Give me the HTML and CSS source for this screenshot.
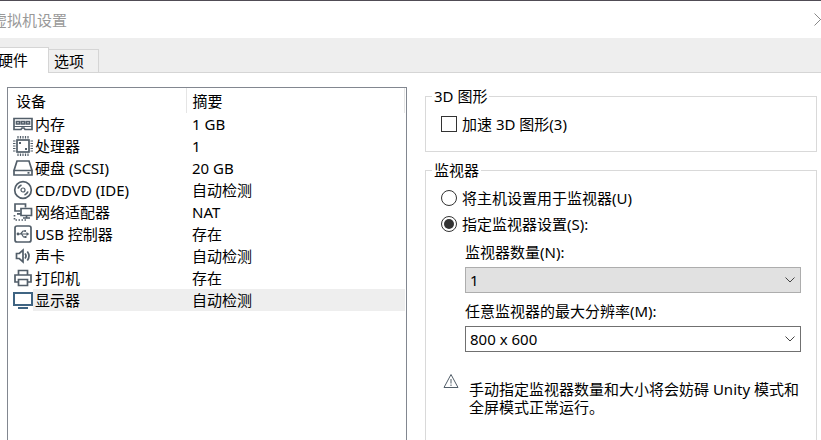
FILE: index.html
```html
<!DOCTYPE html>
<html lang="zh-CN">
<head>
  <meta charset="UTF-8">
  <meta name="viewport" content="width=device-width, initial-scale=1.0">
  <title>虚拟机设置</title>
  <link rel="stylesheet" href="styles.css">
</head>
<body>
  <div class="dialog">
    <header class="titlebar">
      <h1>虚拟机设置</h1>
      <button type="button" class="close" aria-label="关闭">
        <svg width="13" height="13" viewBox="0 0 13 13"><path d="M.5 .5l12 12M12.5 .5l-12 12"/></svg>
      </button>
    </header>

    <nav class="tabs">
      <button type="button" class="tab active">硬件</button>
      <button type="button" class="tab">选项</button>
    </nav>

    <main class="content">
      <!-- Device list -->
      <div class="devices">
        <table>
          <thead>
            <tr><th class="name">设备</th><th>摘要</th></tr>
          </thead>
          <tbody>
            <tr>
              <td><div class="device"><svg class="icon" viewBox="0 0 20 20"><path d="M1 4.500h18v11h-7l-1-1.500H9l-1 1.500H1z"/><path d="M3.500 7.500h3v2.500h-3zM8.500 7.500h3v2.500h-3zM13.500 7.500h3v2.500h-3z"/><path d="M1 12.500h18" stroke-width="1"/></svg><span>内存</span></div></td>
              <td>1 GB</td>
            </tr>
            <tr>
              <td><div class="device"><svg class="icon" viewBox="0 0 20 20"><rect x="4" y="4" width="12" height="12"/><path d="M5 0v2.500M7.500 0v2.500M10 0v2.500M12.500 0v2.500M15 0v2.500M5 17.500V20M7.500 17.500V20M10 17.500V20M12.500 17.500V20M15 17.500V20M0 5h2.500M0 7.500h2.500M0 10h2.500M0 12.500h2.500M0 15h2.500M17.500 5H20M17.500 7.500H20M17.500 10H20M17.500 12.500H20M17.500 15H20" stroke-width="1.200"/><path class="solid" d="M6 6h2v2H6zM12 12h2v2h-2z"/></svg><span>处理器</span></div></td>
              <td>1</td>
            </tr>
            <tr>
              <td><div class="device"><svg class="icon" viewBox="0 0 20 20"><path d="M4 3h12l3 9.500H1zM1 12.500h18V17H1zM14.500 14.800h2"/></svg><span>硬盘 (SCSI)</span></div></td>
              <td>20 GB</td>
            </tr>
            <tr>
              <td><div class="device"><svg class="icon" viewBox="0 0 20 20"><circle cx="10" cy="10" r="8.300"/><circle cx="10" cy="10" r="2" stroke-width="1.200"/><path d="M5 8.500Q6 6 8.500 5M15 11.500Q14 14 11.500 15"/></svg><span>CD/DVD (IDE)</span></div></td>
              <td>自动检测</td>
            </tr>
            <tr>
              <td><div class="device"><svg class="icon" viewBox="0 0 20 20"><path d="M7 9H2V2h10.500v3.500M4 11.800h4"/><path d="M8 6.500h10.500v7H8zM13.500 13.500V16M10 16h7"/><path d="M1.500 13v5H13" stroke-dasharray="1.500 1.500"/></svg><span>网络适配器</span></div></td>
              <td>NAT</td>
            </tr>
            <tr>
              <td><div class="device"><svg class="icon" viewBox="0 0 20 20"><rect x="2" y="2" width="16" height="16" rx="2"/><path d="M5 10h9.500M7.500 10l2.500-3h2M8.500 10l2 3h2" stroke-width="1.200"/><path class="solid" d="M13.500 8l2.800 2-2.800 2z"/><circle class="solid" cx="5" cy="10" r="1.400"/><circle class="solid" cx="12.200" cy="7" r="1"/><path class="solid" d="M11.500 12h2v2h-2z"/></svg><span>USB 控制器</span></div></td>
              <td>存在</td>
            </tr>
            <tr>
              <td><div class="device"><svg class="icon" viewBox="0 0 20 20"><path d="M3.500 7.500h2.800l3.700-3.300v11.600l-3.700-3.300H3.500zM12 7.500q2 2.500 0 5M14.300 5.500q3.400 4.500 0 9"/></svg><span>声卡</span></div></td>
              <td>自动检测</td>
            </tr>
            <tr>
              <td><div class="device"><svg class="icon" viewBox="0 0 20 20"><path d="M5.500 7V2.500h9V7M5 14H2V7h16v7h-3M5.500 11.500h9v6h-9z"/></svg><span>打印机</span></div></td>
              <td>存在</td>
            </tr>
            <tr class="selected">
              <td><div class="device"><svg class="icon display" viewBox="0 0 20 20"><path d="M1 3h18v12H1z"/><path d="M5 18h10"/></svg><span>显示器</span></div></td>
              <td>自动检测</td>
            </tr>
          </tbody>
        </table>
      </div>

      <!-- Display settings -->
      <form class="settings">
        <fieldset>
          <legend>3D 图形</legend>
          <label class="option"><input type="checkbox" name="accelerate">加速 3D 图形(3)</label>
        </fieldset>

        <fieldset class="monitor">
          <legend>监视器</legend>
          <label class="option"><input type="radio" name="monitor" value="host">将主机设置用于监视器(U)</label>
          <label class="option"><input type="radio" name="monitor" value="custom" checked>指定监视器设置(S):</label>

          <div class="field">
            <label for="count">监视器数量(N):</label>
            <div class="select">
              <select id="count" class="muted">
                <option>1</option>
              </select>
              <svg width="10" height="6" viewBox="0 0 10 6"><path d="M.5 .5L5 5L9.500 .5"/></svg>
            </div>
          </div>
          <div class="field">
            <label for="resolution">任意监视器的最大分辨率(M):</label>
            <div class="select">
              <select id="resolution">
                <option>800 x 600</option>
              </select>
              <svg width="10" height="6" viewBox="0 0 10 6"><path d="M.5 .5L5 5L9.500 .5"/></svg>
            </div>
          </div>

          <div class="warning">
            <svg width="16" height="16" viewBox="0 0 16 16"><path d="M8 1.500L15 14.500H1zM8 6v4.500M8 11.500v1.500"/></svg>
            <p>手动指定监视器数量和大小将会妨碍 Unity 模式和全屏模式正常运行。</p>
          </div>
        </fieldset>
      </form>
    </main>
  </div>
</body>
</html>
```

FILE: styles.css
```css
* {
  box-sizing: border-box;
}

body {
  margin: 0;
  overflow: hidden;
  background: #fff;
  color: #000;
  font-family: "Noto Sans", "Noto Sans CJK SC", sans-serif;
  font-size: 15px;
  line-height: 20px;
}

button, select {
  font: inherit;
  color: inherit;
}

svg {
  flex: none;
  fill: none;
  stroke: #525e69;
}

/* The dialog is a little wider than the viewport on both sides */
.dialog {
  display: flex;
  flex-direction: column;
  height: 100vh;
  margin: 0 -6px 0 -8px;
  border-top: 1px solid #504c55;
}

.titlebar {
  display: flex;
  align-items: center;
  justify-content: space-between;
  height: 37px;
}

.titlebar h1 {
  margin: 0;
  color: #999;
  font-size: 15px;
  font-weight: normal;
}

.close {
  display: flex;
  padding: 0;
  border: none;
  background: none;
}

.close svg {
  stroke: #888;
}

/* Tabs */
.tabs {
  display: flex;
  align-items: flex-end;
  height: 35px;
  background: #eee;
  box-shadow: inset 0 -1px #d5d5d5;
}

.tab {
  height: 24px;
  padding: 0 14px 0 5px;
  border: 1px solid #d5d5d5;
  border-left: none;
  background: #f0f0f0;
}

.tab.active {
  height: 26px;
  padding: 0 20px 2px 6px;
  border-bottom: none;
  background: #fff;
}

.content {
  display: grid;
  grid-template-columns: 400fr 392fr;
  gap: 18px;
  flex: 1;
  min-height: 0;
  padding: 14px 10px 0 15px;
}

/* Device list */
.devices {
  border: 1px solid #828790;
  border-bottom: none;
  padding-right: 1px;
}

table {
  width: 100%;
  border-collapse: collapse;
  table-layout: fixed;
}

th, td {
  height: 22px;
  padding: 0 0 0 6px;
  text-align: left;
  font-weight: normal;
}

th {
  height: 25px;
  border-right: 1px solid #e5e5e5;
}

th.name {
  width: 178px;
  padding-left: 8px;
}

td:first-child {
  padding-left: 5px;
}

.device {
  display: flex;
  align-items: center;
  gap: 2px;
}

.icon {
  width: 20px;
  height: 20px;
  stroke-width: 1.7;
}

.solid {
  fill: #525e69;
  stroke: none;
}

.display {
  stroke: #3f6482;
  stroke-width: 2;
}

.selected {
  background: linear-gradient(to right, #fff 25px, #eee 25px);
}

/* Settings */
.settings {
  display: flex;
  flex-direction: column;
  gap: 8px;
  margin-top: -1px;
  min-width: 0;
}

fieldset {
  min-width: 0;
  margin: 0;
  padding: 8px 15px 17px;
  border: 1px solid #d9d9d9;
}

legend {
  margin-left: -9px;
  padding: 0 2px;
}

.option {
  display: flex;
  align-items: center;
  gap: 5px;
}

.option + .option {
  margin-top: 6px;
}

.option input {
  display: grid;
  place-content: center;
  width: 16px;
  height: 16px;
  margin: 0;
  border: 1px solid #333;
  background: #fff;
  appearance: none;
}

.option input[type="radio"] {
  border-radius: 50%;
}

.option input:checked::before {
  content: "";
  width: 10px;
  height: 10px;
  border-radius: 50%;
  background: #333;
}

.monitor {
  flex: 1;
  border-bottom: none;
}

.field {
  display: flex;
  flex-direction: column;
  gap: 5px;
  margin-top: 8px;
  padding-left: 24px;
}

.select {
  display: grid;
  align-items: center;
}

.select select,
.select svg {
  grid-area: 1 / 1;
}

.select svg {
  justify-self: end;
  margin-right: 6px;
  stroke: #444;
  pointer-events: none;
}

select {
  width: 100%;
  height: 26px;
  padding: 0 4px;
  border: 1px solid #707070;
  border-radius: 0;
  background: #fff;
  appearance: none;
}

select.muted {
  border-color: #adadad;
  background: #e1e1e1;
}

.warning {
  display: flex;
  gap: 10px;
  margin-top: 21px;
  padding-left: 2px;
}

.warning p {
  margin: 7px 0 0;
  line-height: 18px;
}
```
